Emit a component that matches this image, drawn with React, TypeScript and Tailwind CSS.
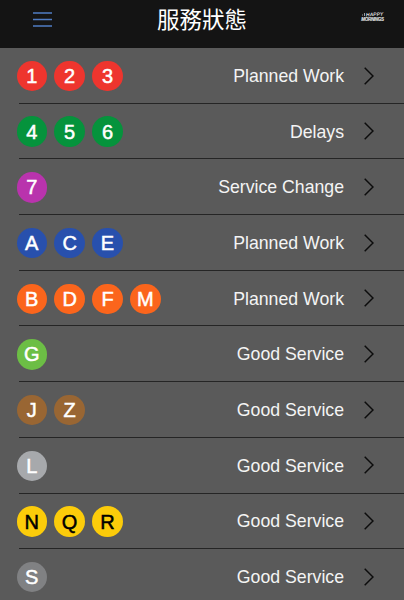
interface Line {
  names: string[];
  color: string;
  status: string;
}

const LINES: Line[] = [
  { names: ["1", "2", "3"], color: "bg-[#ee352e] text-white", status: "Planned Work" },
  { names: ["4", "5", "6"], color: "bg-[#05933c] text-white", status: "Delays" },
  { names: ["7"], color: "bg-[#b933ad] text-white", status: "Service Change" },
  { names: ["A", "C", "E"], color: "bg-[#2850ad] text-white", status: "Planned Work" },
  { names: ["B", "D", "F", "M"], color: "bg-[#fb651c] text-white", status: "Planned Work" },
  { names: ["G"], color: "bg-[#6cbe45] text-white", status: "Good Service" },
  { names: ["J", "Z"], color: "bg-[#996633] text-white", status: "Good Service" },
  { names: ["L"], color: "bg-[#a7a9ac] text-white", status: "Good Service" },
  { names: ["N", "Q", "R"], color: "bg-[#fccc0a] text-black", status: "Good Service" },
  { names: ["S"], color: "bg-[#808183] text-white", status: "Good Service" },
];

function Header() {
  return (
    <header className="flex h-12 shrink-0 items-start bg-[#141414] pl-[33px] pr-[20px]">
      <button aria-label="Menu" className="mt-3">
        <svg width="19" height="15" viewBox="0 0 19 15" className="block" stroke="#4f7cc4" strokeWidth="1.4">
          <path d="M0 1H19M0 7.5H19M0 14H19" />
        </svg>
      </button>
      <h1 className="ml-[105px] mt-px font-['Noto_Sans_CJK_TC',sans-serif] text-[22.5px] leading-[34px] text-white">
        服務狀態
      </h1>
      <div className="ml-auto mt-[11px] flex w-[23px] flex-col items-center whitespace-nowrap font-['Liberation_Sans',sans-serif] font-bold italic text-[#d8d8d8]">
        <div className="flex items-center text-[5px] leading-[6px]">
          <svg width="4" height="5" viewBox="0 0 4 5" fill="none" stroke="currentColor" strokeWidth="0.7">
            <path d="M0 3H1M2.5 1V4" />
          </svg>
          <span className="-rotate-3">HAPPY</span>
        </div>
        <span className="text-[4.5px] leading-[5px] tracking-[-0.3px] [-webkit-text-stroke:0.2px_currentColor]">MORNINGS</span>
      </div>
    </header>
  );
}

function LineRow({ line }: { line: Line }) {
  return (
    <li className="flex h-[55.7px] shrink-0 flex-col">
      <div className="flex flex-1 items-center pl-[16.5px] pr-[30px] pt-[1.4px]">
        <div className="flex gap-[7.4px]">
          {line.names.map((name) => (
            <span
              key={name}
              className={`flex h-[30.5px] w-[30.5px] items-center justify-center rounded-full text-[20px] leading-none [-webkit-text-stroke:0.5px_currentColor] ${line.color}`}
            >
              {name}
            </span>
          ))}
        </div>
        <span className="ml-auto mr-5 pt-[1.6px] text-[17.7px] leading-none text-[#f4f4f4]">{line.status}</span>
        <svg width="10" height="18" viewBox="0 0 10 18" className="-mt-px block" fill="none" stroke="#0c0c0c" strokeWidth="1.5">
          <path d="M0.7 0.8L9 9L0.7 17.2" />
        </svg>
      </div>
      <div className="ml-[19px] h-px shrink-0 bg-[#252525]" />
    </li>
  );
}

export default function App() {
  return (
    <div className="flex h-[600px] w-[404px] flex-col overflow-hidden bg-[#5a5a5a] font-['Liberation_Sans',Arial,sans-serif]">
      <Header />
      <ul className="flex flex-col">
        {LINES.map((line) => (
          <LineRow key={line.names[0]} line={line} />
        ))}
      </ul>
    </div>
  );
}
